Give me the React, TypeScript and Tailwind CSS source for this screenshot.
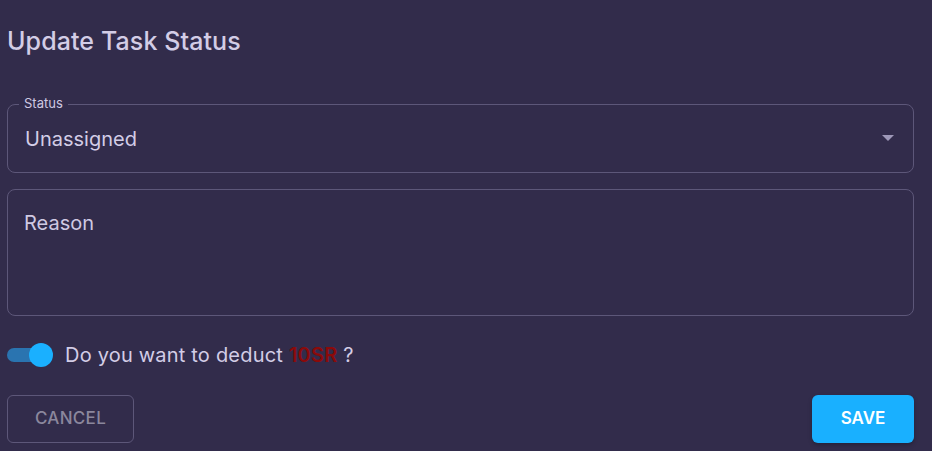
import React from "react";

export default function App() {
  return (
    <div
      className="w-[932px] h-[451px] bg-[#322c4b] overflow-hidden pl-[7px] pr-[18px] pt-[26px]"
      style={{ fontFamily: "Inter, 'Noto Sans', sans-serif" }}
    >
      <h1 className="text-[25px] leading-[30px] font-medium text-[#d3cde6] tracking-[0.1px]">
        Update Task Status
      </h1>

      <div className="mt-[48px] relative h-[69px] border border-[#5d5779] rounded-[8px] flex items-center pl-[17px] pr-[19px]">
        <span className="absolute -top-[10px] left-[11px] px-[5px] bg-[#322c4b] text-[13px] leading-[16px] text-[#cfc9e2]">
          Status
        </span>
        <span className="flex-1 text-[20px] leading-[24px] text-[#d3cde6] mt-[1px]">Unassigned</span>
        <svg width="12" height="6" viewBox="0 0 12 6" className="mt-[-1px]">
          <path d="M0 0 L12 0 L6 6 Z" fill="#9e98b8" />
        </svg>
      </div>

      <div className="mt-[16px] h-[127px] border border-[#5d5779] rounded-[8px] pl-[16px] pt-[21px]">
        <span className="text-[20px] leading-[24px] text-[#cfc9e2]">Reason</span>
      </div>

      <div className="mt-[26px] flex items-center h-[26px]">
        <div className="relative w-[48px] h-[26px] flex items-center">
          <div className="w-[44px] h-[14px] rounded-full bg-[#2a74b0]" />
          <div className="absolute left-[22px] top-[1px] w-[24px] h-[24px] rounded-full bg-[#1ab0ff]" />
        </div>
        <span className="ml-[10px] text-[20px] text-[#d3cde6] tracking-[0.2px]">
          Do you want to deduct <span className="text-[#8b0a0a] font-semibold">10SR</span> ?
        </span>
      </div>

      <div className="mt-[27px] flex justify-between">
        <button className="w-[127px] h-[48px] border border-[#5d5779] rounded-[6px] text-[17px] font-medium text-[#8b879d] tracking-[0.3px]">
          CANCEL
        </button>
        <button className="w-[102px] h-[48px] rounded-[6px] bg-[#19b0ff] text-[17px] font-semibold text-white shadow-[0_2px_4px_rgba(0,0,0,0.25)]">
          SAVE
        </button>
      </div>
    </div>
  );
}
